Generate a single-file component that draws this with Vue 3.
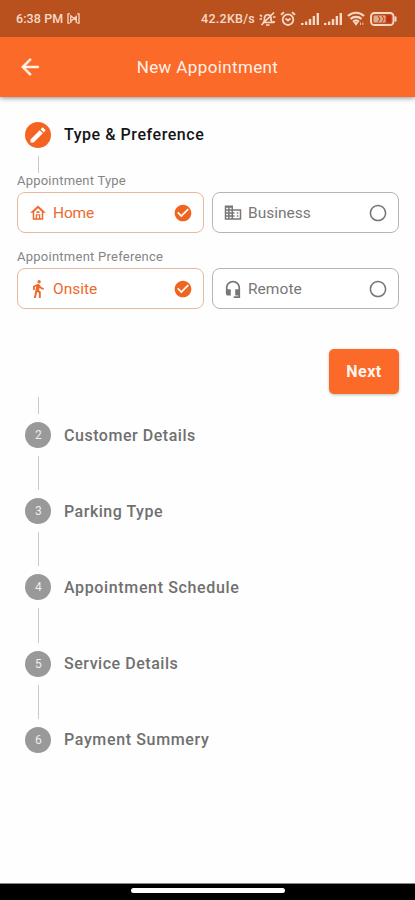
<template>
  <div class="screen">
    <header class="top">
      <div class="status-bar">
        <span class="time">6:38 PM</span>
        <svg class="cast" width="13" height="11" viewBox="0 0 14 12" fill="none" stroke="currentColor" stroke-width="1.4">
          <path d="M3 1H1v10h2M11 1h2v10h-2M4 11V3l6 5V3M4 9l6-5v7" />
        </svg>
        <span class="speed">42.2KB/s</span>
        <svg class="bell" width="17" height="16" viewBox="0 0 17 16" fill="none" stroke="currentColor" stroke-width="1.7">
          <path d="M4.500 11.500h9L12 9.500V6.500a3.300 3.300 0 0 0-6.500 0v3zM7 14h3.500M15 1.500 2.500 14M1 4l2 1.500M.5 8H3M14 10.500l2 .8M14 6h2.500" />
        </svg>
        <svg class="alarm" width="16" height="16" viewBox="0 0 16 16" fill="none" stroke="currentColor" stroke-width="1.8">
          <circle cx="8" cy="8.700" r="5.300" />
          <path d="M1 3.800 4 1.300M15 3.800l-3-2.500M5.500 7.500l2.500 2 2.500-2" />
        </svg>
        <svg v-for="n in 2" :key="n" class="signal" width="18" height="12" viewBox="0 0 18 12" fill="currentColor">
          <path d="M0 10h2.500v2H0zM4 8.500h2.300V12H4zM7.800 6h2.400v6H7.800zM11.700 3H14v9h-2.300zM15.600 0H18v12h-2.400z" />
        </svg>
        <svg class="wifi" width="18" height="15" viewBox="0 0 18 15" fill="none" stroke="currentColor" stroke-width="2.200">
          <path d="M1 5a11.500 11.500 0 0 1 16 0M3.500 8a8 8 0 0 1 11 0M6 10.800a4.500 4.500 0 0 1 6 0" />
          <path d="M7 11.500h4l-2 2.800zM13.500 11.500V14M15.800 11.500V14" fill="currentColor" stroke-width=".8" />
        </svg>
        <svg class="battery" width="27" height="14" viewBox="0 0 27 14" fill="none" stroke="currentColor" stroke-width="1.900">
          <rect x="1" y="1" width="22.500" height="12" rx="3.500" />
          <rect x="3.500" y="3.500" width="12" height="7" rx="1" fill="#e2ab8d" stroke="none" />
          <rect x="16.500" y="3.500" width="4.500" height="7" rx="1" fill="#c82b10" stroke="none" />
          <path d="m8 4 2 3-2 3M12 4l2 3-2 3" stroke="#b9511f" stroke-width="1.100" />
          <path d="M25.500 4.500v5" stroke-width="2" />
        </svg>
      </div>
      <div class="app-bar">
        <svg class="back" width="26" height="26" viewBox="0 0 24 24" fill="currentColor" stroke="currentColor" stroke-width=".4">
          <path d="M20 11H7.830l5.590-5.590L12 4l-8 8 8 8 1.410-1.410L7.830 13H20v-2z" />
        </svg>
        <h1>New Appointment</h1>
      </div>
    </header>

    <main>
      <div class="step active">
        <span class="badge">
          <svg width="20" height="20" viewBox="0 0 24 24" fill="currentColor">
            <path d="M3 17.250V21h3.750L17.810 9.940l-3.750-3.750L3 17.250zM20.710 7.040a1 1 0 0 0 0-1.410l-2.340-2.340a1 1 0 0 0-1.410 0l-1.830 1.830 3.750 3.750 1.830-1.830z" />
          </svg>
        </span>
        <span class="title" :style="{ letterSpacing: '0.55px' }">Type &amp; Preference</span>
      </div>
      <div class="line short"></div>

      <section v-for="group in groups" :key="group.label" class="group">
        <p class="label" :style="{ letterSpacing: group.spacing + 'px' }">{{ group.label }}</p>
        <div class="options">
          <button
            v-for="option in group.options"
            :key="option.name"
            class="option"
            :class="{ selected: group.selected === option.name }"
            @click="group.selected = option.name"
          >
            <svg class="option-icon" width="18" height="18" viewBox="0 0 24 24" fill="currentColor">
              <path :d="option.icon" />
            </svg>
            <span class="name" :style="{ letterSpacing: option.spacing + 'px' }">{{ option.name }}</span>
            <svg class="mark" width="20" height="20" viewBox="0 0 24 24" fill="currentColor">
              <path v-if="group.selected === option.name" :d="checked" />
              <path v-else :d="unchecked" />
            </svg>
          </button>
        </div>
      </section>

      <div class="actions">
        <button class="next">Next</button>
      </div>
      <div class="line short last"></div>

      <template v-for="(step, index) in steps" :key="step.title">
        <div v-if="index > 0" class="line"></div>
        <div class="step">
          <span class="badge">{{ index + 2 }}</span>
          <span class="title" :style="{ letterSpacing: step.spacing + 'px' }">{{ step.title }}</span>
        </div>
      </template>
    </main>

    <footer><span class="handle"></span></footer>
  </div>
</template>

<script setup>
import { ref } from 'vue';

const checked = 'M12 2C6.480 2 2 6.480 2 12s4.480 10 10 10 10-4.480 10-10S17.520 2 12 2zm-2 15-5-5 1.410-1.410L10 14.170l7.590-7.590L19 8l-9 9z';
const unchecked = 'M12 2C6.480 2 2 6.480 2 12s4.480 10 10 10 10-4.480 10-10S17.520 2 12 2zm0 18.200a8.200 8.200 0 1 1 0-16.400 8.200 8.200 0 0 1 0 16.400z';

const groups = ref([
  {
    label: 'Appointment Type',
    spacing: 0.22,
    selected: 'Home',
    options: [
      {
        name: 'Home',
        spacing: -0.15,
        icon: 'M12 2 1.500 11.500H5V21h14v-9.500h3.500L12 2zm5 17h-2v-5.500H9V19H7v-8.700l5-4.500 5 4.500V19zM10.700 15h2.600v4h-2.600zM10 9.500h4V12h-4z'
      },
      {
        name: 'Business',
        spacing: 0,
        icon: 'M12 7V2H1v19h22V7H12zM5.500 19H3v-2h2.500v2zm0-4H3v-2h2.500v2zm0-4H3V9h2.500v2zm0-4H3V5h2.500v2zM10 19H7.500v-2H10v2zm0-4H7.500v-2H10v2zm0-4H7.500V9H10v2zm0-4H7.500V5H10v2zm11 12h-9v-2h2v-2h-2v-2h2v-2h-2V9h9v10zm-2-8h-2v2h2v-2zm0 4h-2v2h2v-2z'
      }
    ]
  },
  {
    label: 'Appointment Preference',
    spacing: 0.25,
    selected: 'Onsite',
    options: [
      {
        name: 'Onsite',
        spacing: 0,
        icon: 'M13.500 4.500c1.200 0 2.200-1 2.200-2.200S14.700.1 13.500.1s-2.200 1-2.200 2.200 1 2.200 2.200 2.200zM9.600 8.700 6.500 24h2.600l1.900-8.400 2.200 2.100V24h2.500v-8.300l-2.300-2.200.7-3.200c1.300 1.500 3.300 2.600 5.600 2.600v-2.400c-2 0-3.600-1-4.500-2.500l-1-1.700c-.5-.7-1.200-1.100-2-1.100-.3 0-.6.1-.9.2L5.400 7.900v5.300h2.400V9.400l1.800-.7'
      },
      {
        name: 'Remote',
        spacing: 0.05,
        icon: 'M12 1C6.800 1 2.500 5.200 2.500 10.400V18c0 1.600 1.200 2.700 2.700 2.700H9v-8.400H4.800v-1.900c0-3.900 3.200-7.100 7.200-7.100s7.200 3.200 7.200 7.100v1.900H15v8.400h4.200v.8H13V24h8.500V10.400C21.500 5.200 17.200 1 12 1z'
      }
    ]
  }
]);

const steps = [
  { title: 'Customer Details', spacing: 0.53 },
  { title: 'Parking Type', spacing: 0.5 },
  { title: 'Appointment Schedule', spacing: 0.64 },
  { title: 'Service Details', spacing: 0.53 },
  { title: 'Payment Summery', spacing: 0.64 }
];
</script>

<style>
body {
  margin: 0;
  background: #fff;
}
</style>

<style scoped>
.screen {
  display: flex;
  flex-direction: column;
  height: 900px;
  overflow: hidden;
  background: #fefefe;
  font-family: Roboto, sans-serif;
}

.top {
  color: #fff1e8;
  background: #fb6a29;
  box-shadow: 0 1px 5px rgba(0, 0, 0, 0.45);
}

.status-bar {
  display: flex;
  align-items: center;
  box-sizing: border-box;
  height: 37px;
  padding: 0 18px 0 16px;
  color: #f8d9c7;
  background: #b9511f;
  font-size: 12.500px;
  font-weight: 500;
}

.time {
  letter-spacing: 0.1px;
}

.cast {
  margin-left: 4px;
}

.speed {
  margin-left: auto;
  letter-spacing: 0.250px;
}

.bell {
  margin-left: 4px;
}

.alarm {
  margin-left: 4px;
}

.signal {
  margin-left: 5px;
}

.wifi {
  margin-left: 5px;
}

.battery {
  margin-left: 5px;
}

.app-bar {
  display: flex;
  align-items: center;
  height: 60px;
  padding: 0 17px;
}

h1 {
  flex: 1;
  margin: 0 26px 0 0;
  text-align: center;
  font-size: 17px;
  font-weight: 400;
  letter-spacing: 0.37px;
}

main {
  flex: 1;
  padding: 24px 16px 0 17px;
}

.step {
  display: flex;
  align-items: center;
  height: 27px;
  padding-left: 8.400px;
  color: #707070;
}

.active {
  color: #151515;
}

.badge {
  display: flex;
  align-items: center;
  justify-content: center;
  width: 26px;
  height: 26px;
  margin-right: 12.600px;
  border-radius: 50%;
  color: #eee;
  background: #999;
  font-size: 12px;
}

.active .badge {
  color: #fff;
  background: #f46420;
}

.title {
  font-size: 16px;
  font-weight: 500;
}

.line {
  width: 1px;
  height: 34.200px;
  margin: 7.500px 0 7.500px 21px;
  background: #c9c9c9;
}

.line.short {
  height: 17px;
  margin-top: 8px;
  margin-bottom: 0;
}

.line.last {
  margin: 3px 0 8px 21px;
}

.group {
  height: 76px;
}

.label {
  margin: 0;
  height: 19px;
  line-height: 16px;
  font-size: 13px;
  color: #858585;
}

.options {
  display: flex;
  gap: 8px;
}

.option {
  display: flex;
  flex: 1;
  align-items: center;
  box-sizing: border-box;
  height: 41px;
  padding: 0 10px 0 11px;
  border: 1px solid #b5b5b5;
  border-radius: 8px;
  color: #777;
  background: #fff;
  font-family: inherit;
  font-size: 15.500px;
}

.option.selected {
  border-color: #e8b99d;
  color: #ed6a2d;
}

.name {
  margin-left: 6px;
}

.mark {
  margin-left: auto;
}

.selected .mark {
  color: #f0641f;
}

.actions {
  display: flex;
  justify-content: flex-end;
  padding-top: 23.500px;
}

.next {
  width: 70px;
  height: 45px;
  padding: 0;
  border: 0;
  border-radius: 5px;
  color: #fff4ee;
  background: #fb6a29;
  box-shadow: 0 1px 3px rgba(0, 0, 0, 0.25);
  font-family: inherit;
  font-size: 16px;
  font-weight: 700;
  letter-spacing: 0.500px;
}

footer {
  display: flex;
  align-items: center;
  justify-content: center;
  box-sizing: border-box;
  height: 17px;
  padding-bottom: 3px;
  border-top: 1px solid #888;
  background: #000;
}

.handle {
  width: 154px;
  height: 5px;
  border-radius: 3px;
  background: #fff;
}
</style>
